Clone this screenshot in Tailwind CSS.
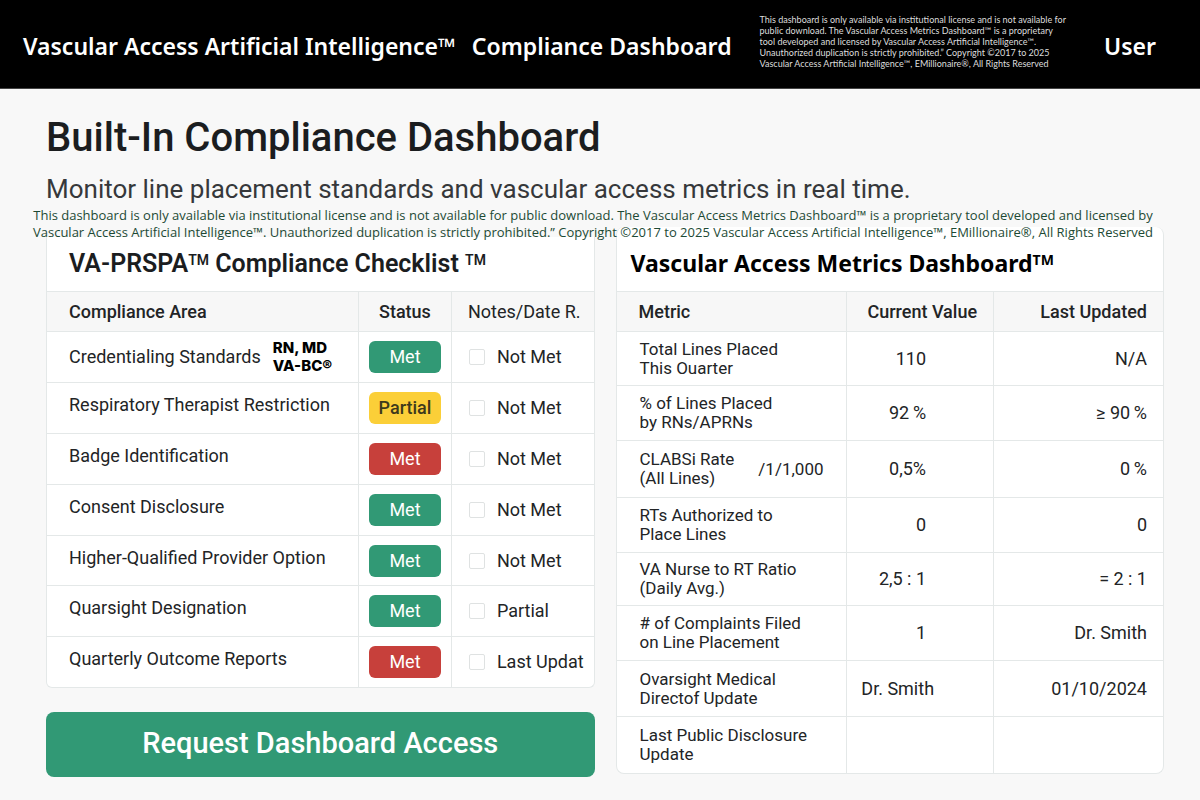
<!DOCTYPE html>
<html lang="en">
<head>
<meta charset="utf-8">
<meta name="viewport" content="width=device-width, initial-scale=1">
<title>Compliance Dashboard</title>
<script src="https://cdn.jsdelivr.net/npm/@tailwindcss/browser@4"></script>
</head>
<body class="min-h-screen bg-[#f8f8f8] font-['Roboto',sans-serif] text-[#222426]">
<header class="flex h-[89px] items-center border-b border-[#444] bg-black pr-11 pl-[23px] font-['Noto_Sans',sans-serif] text-white">
  <div class="flex shrink-0 gap-4 pt-1 text-[23px] font-semibold whitespace-nowrap">
    <a href="#">Vascular Access Artificial Intelligence™</a>
    <span>Compliance Dashboard</span>
  </div>
  <p class="ml-7 pb-1.5 font-['Lato',sans-serif] text-[9px] leading-[11px] whitespace-nowrap text-[#dddddd]">This dashboard is only available via institutional license and is not available for<br>public download. The Vascular Access Metrics Dashboard™ is a proprietary<br>tool developed and licensed by Vascular Access Artificial Intelligence™.<br>Unauthorized duplication is strictly prohibited.” Copyright ©2017 to 2025<br>Vascular Access Artificial Intelligence™, EMillionaire®, All Rights Reserved</p>
  <button type="button" class="ml-auto pt-1 text-[23px] font-semibold">User</button>
</header>

<main class="pt-6 pr-9 pb-6 pl-[46px]">
  <h1 class="text-[40px] leading-[50px] font-medium text-[#1b1d1f]">Built-In Compliance Dashboard</h1>
  <p class="mt-2.5 text-[26px] leading-8 text-[#36383b]">Monitor line placement standards and vascular access metrics in real time.</p>
  <p class="relative z-10 -mr-[22px] -ml-[46px] mt-0.5 text-center font-['Open_Sans',sans-serif] text-[13px] leading-[17px] whitespace-nowrap text-[#1d4a35]">This dashboard is only available via institutional license and is not available for public download. The Vascular Access Metrics Dashboard™ is a proprietary tool developed and licensed by<br>Vascular Access Artificial Intelligence™. Unauthorized duplication is strictly prohibited.” Copyright ©2017 to 2025 Vascular Access Artificial Intelligence™, EMillionaire®, All Rights Reserved</p>

  <div class="-mt-3.5 grid grid-cols-2 items-start gap-[21px]">
    <div class="pt-2.5">
      <section class="overflow-hidden rounded-b-md border border-t-0 border-[#e4e8e8] bg-white">
        <h2 class="flex h-[54px] items-center pl-[22px] text-[25px] font-semibold whitespace-nowrap text-[#1b1d1f]"><span>VA-PRSPA<sup class="text-sm">TM</sup> Compliance Checklist <sup class="text-sm">TM</sup></span></h2>
        <table class="w-full table-fixed border-collapse text-left text-[18px] leading-5">
          <colgroup><col class="w-[57%]"><col class="w-[17%]"><col class="w-[26%]"></colgroup>
          <thead>
            <tr class="h-10 border-y border-[#e4e8e8] bg-[#f7f7f7]">
              <th scope="col" class="pl-[22px] font-medium">Compliance Area</th>
              <th scope="col" class="border-x border-[#e4e8e8] text-center font-medium">Status</th>
              <th scope="col" class="pl-4 font-normal">Notes/Date R.</th>
            </tr>
          </thead>
          <tbody class="divide-y divide-[#e4e8e8]">
            <tr class="h-[51px]">
              <td class="pl-[22px]"><div class="flex items-center gap-3 whitespace-nowrap">Credentialing Standards <strong class="flex flex-col font-['Inter',sans-serif] text-[15px] leading-[18px] font-extrabold text-black"><span>RN, MD</span><span>VA-BC®</span></strong></div></td>
              <td class="border-x border-[#e4e8e8] px-2.5"><span class="flex h-8 items-center justify-center rounded-md bg-[#319975] text-white">Met</span></td>
              <td class="pl-[17px]"><label class="flex items-center gap-3 whitespace-nowrap"><input type="checkbox" class="size-4 appearance-none rounded-xs border border-[#dfe2e2] bg-white">Not Met</label></td>
            </tr>
            <tr class="h-[51px]">
              <td class="pb-1.5 pl-[22px]">Respiratory Therapist Restriction</td>
              <td class="border-x border-[#e4e8e8] px-2.5"><span class="flex h-8 items-center justify-center rounded-md bg-[#fbcf38] font-medium text-[#3d3a1c]">Partial</span></td>
              <td class="pl-[17px]"><label class="flex items-center gap-3 whitespace-nowrap"><input type="checkbox" class="size-4 appearance-none rounded-xs border border-[#dfe2e2] bg-white">Not Met</label></td>
            </tr>
            <tr class="h-[51px]">
              <td class="pb-1.5 pl-[22px]">Badge Identification</td>
              <td class="border-x border-[#e4e8e8] px-2.5"><span class="flex h-8 items-center justify-center rounded-md bg-[#c7403b] text-white">Met</span></td>
              <td class="pl-[17px]"><label class="flex items-center gap-3 whitespace-nowrap"><input type="checkbox" class="size-4 appearance-none rounded-xs border border-[#dfe2e2] bg-white">Not Met</label></td>
            </tr>
            <tr class="h-[51px]">
              <td class="pb-1.5 pl-[22px]">Consent Disclosure</td>
              <td class="border-x border-[#e4e8e8] px-2.5"><span class="flex h-8 items-center justify-center rounded-md bg-[#319975] text-white">Met</span></td>
              <td class="pl-[17px]"><label class="flex items-center gap-3 whitespace-nowrap"><input type="checkbox" class="size-4 appearance-none rounded-xs border border-[#dfe2e2] bg-white">Not Met</label></td>
            </tr>
            <tr class="h-[50px]">
              <td class="pb-1.5 pl-[22px]">Higher-Qualified Provider Option</td>
              <td class="border-x border-[#e4e8e8] px-2.5"><span class="flex h-8 items-center justify-center rounded-md bg-[#319975] text-white">Met</span></td>
              <td class="pl-[17px]"><label class="flex items-center gap-3 whitespace-nowrap"><input type="checkbox" class="size-4 appearance-none rounded-xs border border-[#dfe2e2] bg-white">Not Met</label></td>
            </tr>
            <tr class="h-[51px]">
              <td class="pb-1.5 pl-[22px]">Quarsight Designation</td>
              <td class="border-x border-[#e4e8e8] px-2.5"><span class="flex h-8 items-center justify-center rounded-md bg-[#319975] text-white">Met</span></td>
              <td class="pl-[17px]"><label class="flex items-center gap-3 whitespace-nowrap"><input type="checkbox" class="size-4 appearance-none rounded-xs border border-[#dfe2e2] bg-white">Partial</label></td>
            </tr>
            <tr class="h-[50px]">
              <td class="pb-1.5 pl-[22px]">Quarterly Outcome Reports</td>
              <td class="border-x border-[#e4e8e8] px-2.5"><span class="flex h-8 items-center justify-center rounded-md bg-[#c7403b] text-white">Met</span></td>
              <td class="pl-[17px]"><label class="flex items-center gap-3 whitespace-nowrap"><input type="checkbox" class="size-4 appearance-none rounded-xs border border-[#dfe2e2] bg-white">Last Updat</label></td>
            </tr>
          </tbody>
        </table>
      </section>
      <button type="button" class="mt-6 h-[65px] w-full rounded-lg bg-[#319975] text-[29px] font-medium text-white">Request Dashboard Access</button>
    </div>

    <section class="overflow-hidden rounded-lg border border-t-0 border-[#e4e8e8] bg-white">
      <h2 class="flex h-16 items-center pt-2 pl-3.5 font-['Noto_Sans',sans-serif] text-[23px] font-bold whitespace-nowrap text-black"><span>Vascular Access Metrics Dashboard<sup class="text-sm">TM</sup></span></h2>
      <table class="w-full table-fixed border-collapse text-right text-[18px] leading-5">
        <colgroup><col class="w-[42%]"><col class="w-[27%]"><col class="w-[31%]"></colgroup>
        <thead>
          <tr class="h-10 border-y border-[#e4e8e8] bg-[#f7f7f7]">
            <th scope="col" class="pl-[22px] text-left font-medium">Metric</th>
            <th scope="col" class="border-x border-[#e4e8e8] pr-4 font-medium">Current Value</th>
            <th scope="col" class="pr-4 font-medium">Last Updated</th>
          </tr>
        </thead>
        <tbody class="divide-y divide-[#e4e8e8]">
          <tr class="h-[54px]">
            <th scope="row" class="pl-[23px] text-left text-[17px] leading-[19px] font-normal">Total Lines Placed<br>This Ouarter</th>
            <td class="border-x border-[#e4e8e8] pr-[67px]">110</td>
            <td class="pr-4">N/A</td>
          </tr>
          <tr class="h-[55px]">
            <th scope="row" class="pl-[23px] text-left text-[17px] leading-[19px] font-normal">% of Lines Placed<br>by RNs/APRNs</th>
            <td class="border-x border-[#e4e8e8] pr-[67px]">92&#8201;%</td>
            <td class="pr-4">≥ 90&#8201;%</td>
          </tr>
          <tr class="h-[57px]">
            <th scope="row" class="pr-[22px] pl-[23px] text-left text-[17px] leading-[19px] font-normal"><div class="flex items-center justify-between"><span>CLABSi Rate<br>(All Lines)</span><span>/1/1,000</span></div></th>
            <td class="border-x border-[#e4e8e8] pr-[67px]">0,5%</td>
            <td class="pr-4">0&#8201;%</td>
          </tr>
          <tr class="h-[55px]">
            <th scope="row" class="pl-[23px] text-left text-[17px] leading-[19px] font-normal">RTs Authorized to<br>Place Lines</th>
            <td class="border-x border-[#e4e8e8] pr-[67px]">0</td>
            <td class="pr-4">0</td>
          </tr>
          <tr class="h-[53px]">
            <th scope="row" class="pl-[23px] text-left text-[17px] leading-[19px] font-normal">VA Nurse to RT Ratio<br>(Daily Avg.)</th>
            <td class="border-x border-[#e4e8e8] pr-[67px]">2,5 : 1</td>
            <td class="pr-4">= 2 : 1</td>
          </tr>
          <tr class="h-[55px]">
            <th scope="row" class="pl-[23px] text-left text-[17px] leading-[19px] font-normal"># of Complaints Filed<br>on Line Placement</th>
            <td class="border-x border-[#e4e8e8] pr-[67px]">1</td>
            <td class="pr-4">Dr. Smith</td>
          </tr>
          <tr class="h-14">
            <th scope="row" class="pl-[23px] text-left text-[17px] leading-[19px] font-normal">Ovarsight Medical<br>Directof Update</th>
            <td class="border-x border-[#e4e8e8] pr-[59px]">Dr. Smith</td>
            <td class="pr-4">01/10/2024</td>
          </tr>
          <tr class="h-14">
            <th scope="row" class="pl-[23px] text-left text-[17px] leading-[19px] font-normal">Last Public Disclosure<br>Update</th>
            <td class="border-x border-[#e4e8e8]"></td>
            <td></td>
          </tr>
        </tbody>
      </table>
    </section>
  </div>
</main>
</body>
</html>
